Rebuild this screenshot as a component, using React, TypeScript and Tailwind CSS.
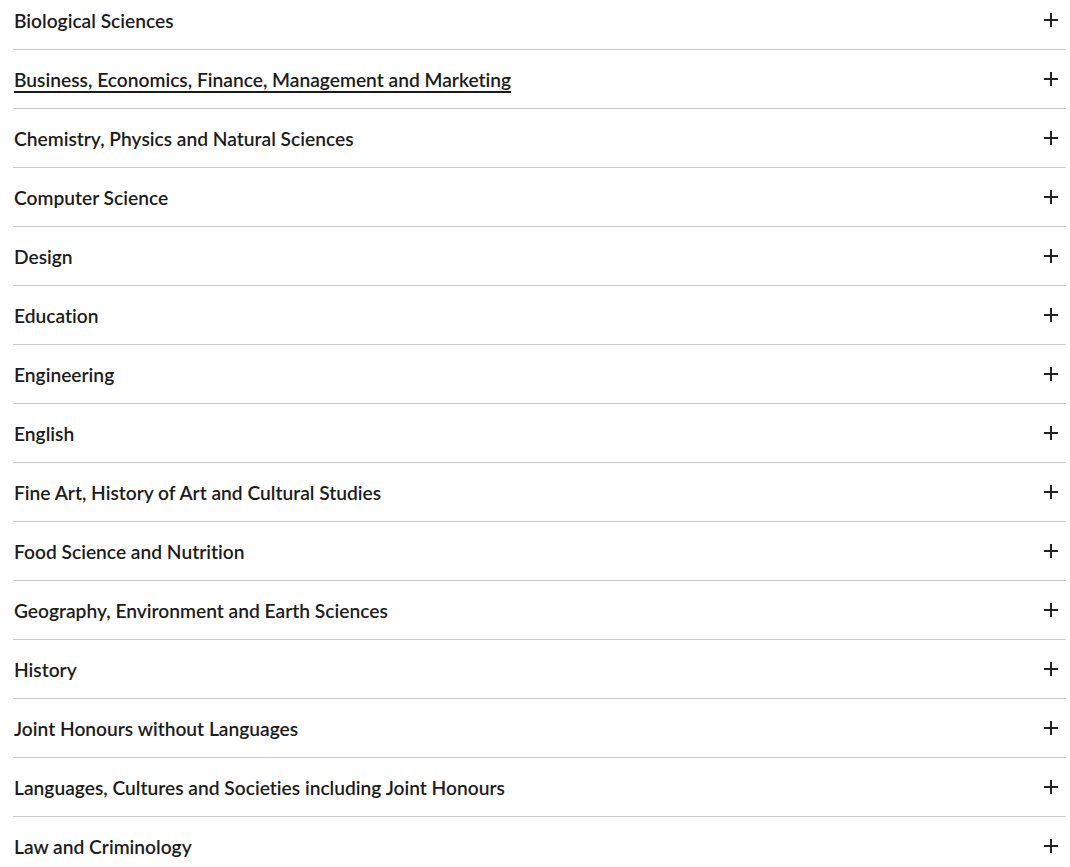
import { useState } from "react";

const subjects = [
  "Biological Sciences",
  "Business, Economics, Finance, Management and Marketing",
  "Chemistry, Physics and Natural Sciences",
  "Computer Science",
  "Design",
  "Education",
  "Engineering",
  "English",
  "Fine Art, History of Art and Cultural Studies",
  "Food Science and Nutrition",
  "Geography, Environment and Earth Sciences",
  "History",
  "Joint Honours without Languages",
  "Languages, Cultures and Societies including Joint Honours",
  "Law and Criminology",
];

function PlusIcon() {
  return (
    <svg width="16" height="16" viewBox="0 0 16 16" className="shrink-0 -mt-[2px]">
      <path d="M8 1v14M1 8h14" stroke="#222" strokeWidth="2" fill="none" />
    </svg>
  );
}

export default function App() {
  const [hovered] = useState(1);

  return (
    <div className="min-h-screen bg-white overflow-hidden">
      <ul className="mt-[-9px] ml-[13px] w-[1053px]" style={{ fontFamily: "Lato, 'Open Sans', sans-serif" }}>
        {subjects.map((s, i) => (
          <li
            key={s}
            className="flex h-[59px] items-center justify-between border-b border-[#cccccc] pl-px pr-[7px] pt-[2px]"
          >
            <span
              className={
                "text-[19.2px] font-semibold text-[#1c1c1c] [font-variant-ligatures:none] " +
                (i === hovered ? "underline underline-offset-[4px] decoration-[2px]" : "")
              }
            >
              {s}
            </span>
            <PlusIcon />
          </li>
        ))}
      </ul>
    </div>
  );
}
